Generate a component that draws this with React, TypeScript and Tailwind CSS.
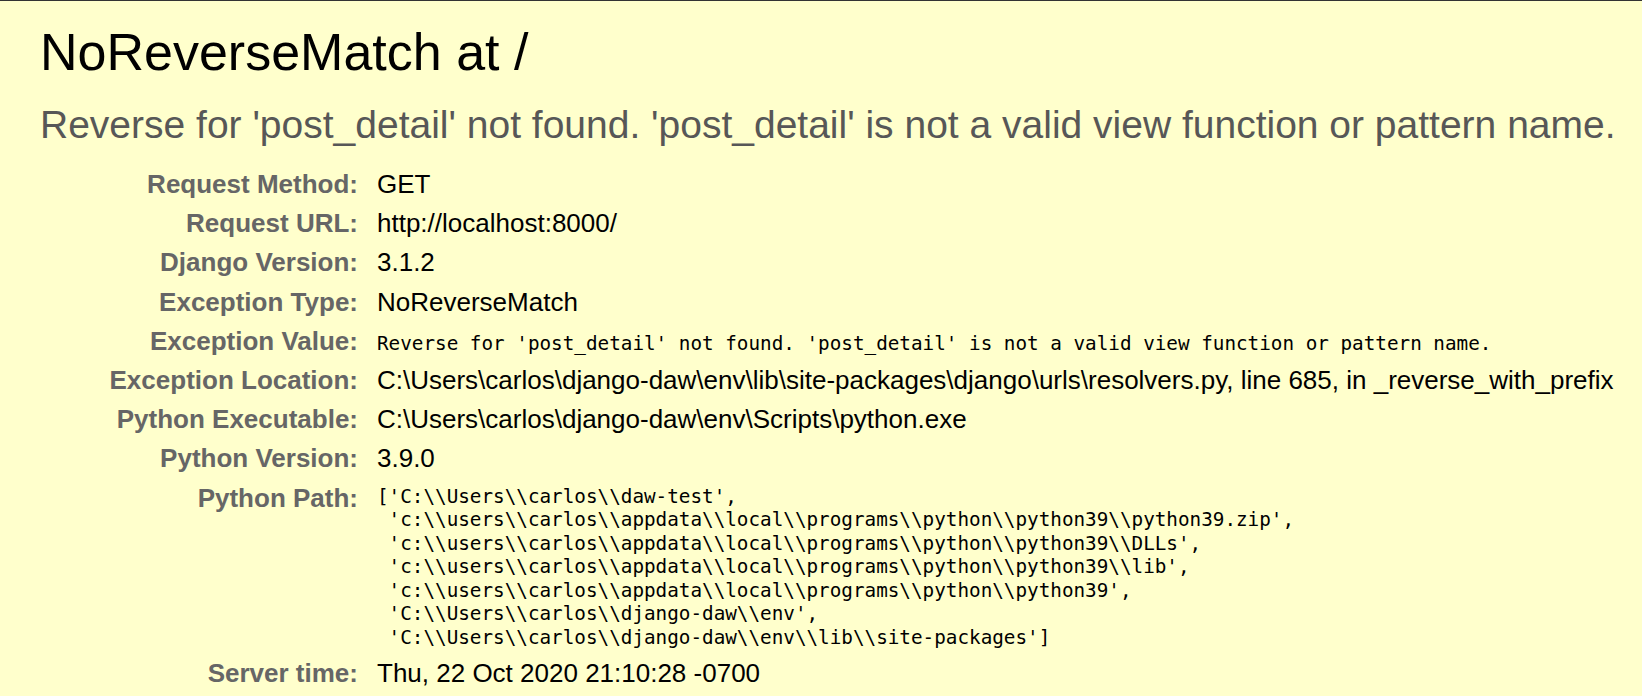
import React from "react";

const sans = { fontFamily: '"Liberation Sans", Arial, sans-serif' };

const pathLines = [
  "['C:\\\\Users\\\\carlos\\\\daw-test',",
  " 'c:\\\\users\\\\carlos\\\\appdata\\\\local\\\\programs\\\\python\\\\python39\\\\python39.zip',",
  " 'c:\\\\users\\\\carlos\\\\appdata\\\\local\\\\programs\\\\python\\\\python39\\\\DLLs',",
  " 'c:\\\\users\\\\carlos\\\\appdata\\\\local\\\\programs\\\\python\\\\python39\\\\lib',",
  " 'c:\\\\users\\\\carlos\\\\appdata\\\\local\\\\programs\\\\python\\\\python39',",
  " 'C:\\\\Users\\\\carlos\\\\django-daw\\\\env',",
  " 'C:\\\\Users\\\\carlos\\\\django-daw\\\\env\\\\lib\\\\site-packages']",
];

type Row = { label: string; value: React.ReactNode; mono?: boolean; block?: boolean };

const rows: Row[] = [
  { label: "Request Method:", value: "GET" },
  { label: "Request URL:", value: "http://localhost:8000/" },
  { label: "Django Version:", value: "3.1.2" },
  { label: "Exception Type:", value: "NoReverseMatch" },
  {
    label: "Exception Value:",
    value: "Reverse for 'post_detail' not found. 'post_detail' is not a valid view function or pattern name.",
    mono: true,
  },
  {
    label: "Exception Location:",
    value: "C:\\Users\\carlos\\django-daw\\env\\lib\\site-packages\\django\\urls\\resolvers.py, line 685, in _reverse_with_prefix",
  },
  { label: "Python Executable:", value: "C:\\Users\\carlos\\django-daw\\env\\Scripts\\python.exe" },
  { label: "Python Version:", value: "3.9.0" },
  { label: "Python Path:", value: pathLines.join("\n"), mono: true, block: true },
  { label: "Server time:", value: "Thu, 22 Oct 2020 21:10:28 -0700" },
];

export default function App() {
  return (
    <div className="min-h-screen w-full overflow-hidden bg-[#ffffcc] border-t border-[#333]" style={sans}>
      <div className="px-[40px] pt-[21px]">
        <h1 className="text-[52px] leading-[60px] font-normal text-black whitespace-nowrap">NoReverseMatch at /</h1>
        <pre className="mt-[20px] mb-[18px] text-[39px] leading-[45px] text-[#575757] whitespace-nowrap" style={sans}>
          Reverse for 'post_detail' not found. 'post_detail' is not a valid view function or pattern name.
        </pre>
        <div className="flex flex-col">
          {rows.map((r) => (
            <div key={r.label} className={`flex py-[4px] ${r.block ? "items-start" : "items-baseline"}`}>
              <div className="w-[331px] shrink-0 pr-[13px] text-right text-[26px] leading-[31.2px] font-bold text-[#666] whitespace-nowrap">
                {r.label}
              </div>
              <div className="pl-[6px] text-[26px] leading-[31.2px] text-black whitespace-nowrap">
                {r.mono ? (
                  <pre className={`font-['DejaVu_Sans_Mono',monospace] text-[19.3px] leading-[23.57px] whitespace-pre ${r.block ? "mt-[2px]" : ""}`}>
                    {r.value}
                  </pre>
                ) : (
                  r.value
                )}
              </div>
            </div>
          ))}
        </div>
      </div>
    </div>
  );
}
